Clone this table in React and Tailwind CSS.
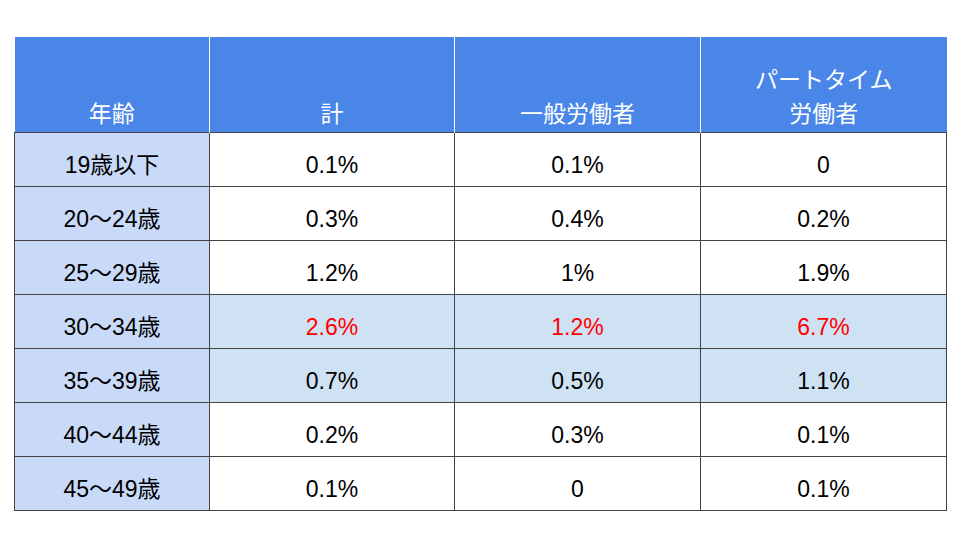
import React from "react";

const ROWS = [
  { age: "19歳以下", total: "0.1%", general: "0.1%", part: "0" },
  { age: "20～24歳", total: "0.3%", general: "0.4%", part: "0.2%" },
  { age: "25～29歳", total: "1.2%", general: "1%", part: "1.9%" },
  { age: "30～34歳", total: "2.6%", general: "1.2%", part: "6.7%", hl: true, red: true },
  { age: "35～39歳", total: "0.7%", general: "0.5%", part: "1.1%", hl: true },
  { age: "40～44歳", total: "0.2%", general: "0.3%", part: "0.1%" },
  { age: "45～49歳", total: "0.1%", general: "0", part: "0.1%" },
];

const FONT = { fontFamily: '"Liberation Sans", "Noto Sans CJK JP", sans-serif' };

const App = () => {
  return (
    <div className="w-[960px] h-[540px] bg-white pt-[37px] pl-[14px]" style={FONT}>
      <table className="border-collapse table-fixed w-[932px] text-[23px]">
        <colgroup>
          <col className="w-[195px]" />
          <col className="w-[245px]" />
          <col className="w-[246px]" />
          <col className="w-[246px]" />
        </colgroup>
        <thead>
          <tr className="h-[95px] bg-[#4a86e8] text-white">
            <th className="font-normal align-bottom pb-[1px] border-r border-white leading-[34px]">年齢</th>
            <th className="font-normal align-bottom pb-[1px] border-r border-white leading-[34px]">計</th>
            <th className="font-normal align-bottom pb-[1px] border-r border-white leading-[34px]">一般労働者</th>
            <th className="font-normal align-bottom pb-[1px] leading-[34px]">
              パートタイム
              <br />
              労働者
            </th>
          </tr>
        </thead>
        <tbody>
          {ROWS.map((r) => (
            <tr key={r.age} className={`h-[54px] ${r.hl ? "bg-[#cfe2f3]" : "bg-white"}`}>
              <td className="bg-[#c9daf8] border border-[#444] text-center text-black pt-[12px]">{r.age}</td>
              <td className={`border border-[#444] text-center pt-[12px] ${r.red ? "text-[#ff0000]" : "text-black"}`}>{r.total}</td>
              <td className={`border border-[#444] text-center pt-[12px] ${r.red ? "text-[#ff0000]" : "text-black"}`}>{r.general}</td>
              <td className={`border border-[#444] text-center pt-[12px] ${r.red ? "text-[#ff0000]" : "text-black"}`}>{r.part}</td>
            </tr>
          ))}
        </tbody>
      </table>
    </div>
  );
};

export default App;
